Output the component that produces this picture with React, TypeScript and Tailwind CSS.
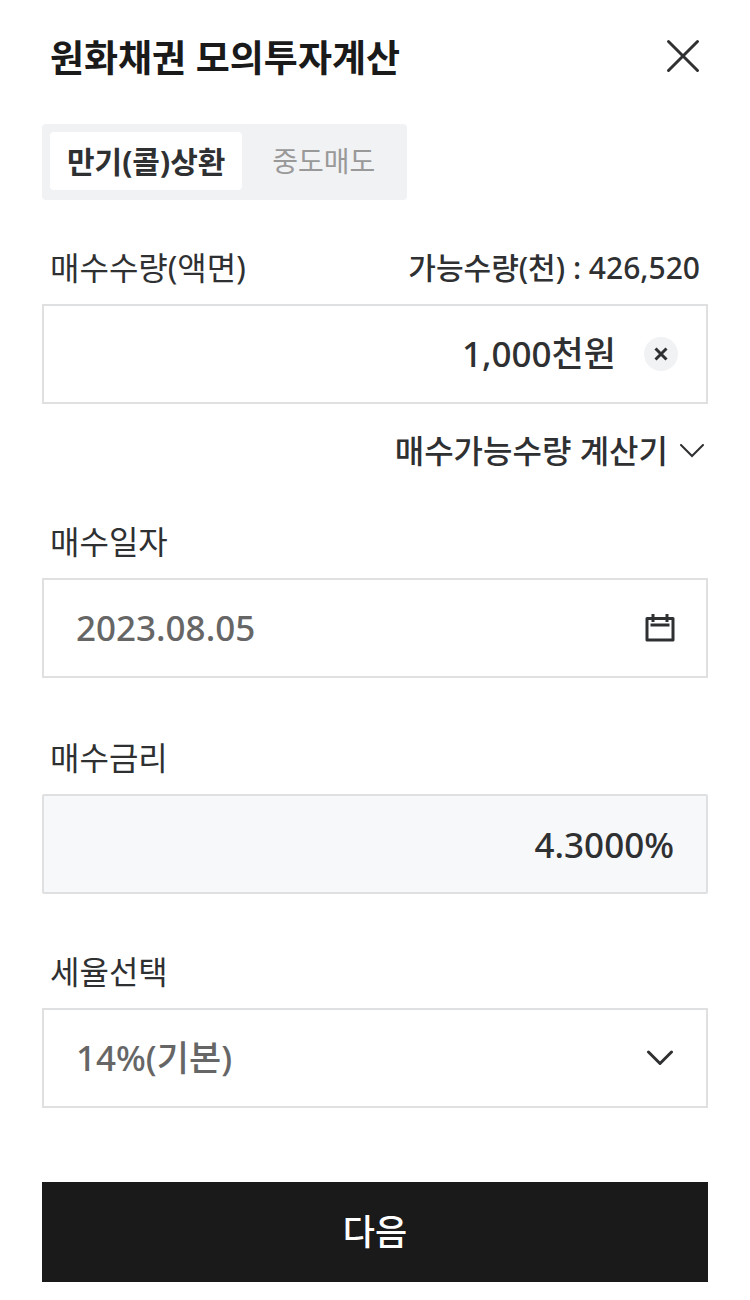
import { useState } from "react";

const label = "px-2 text-[32px] leading-[40px] text-[#2f3032]";

export default function App() {
  const [tab, setTab] = useState(0);
  const [amount, setAmount] = useState("1,000천원");
  const tabs = ["만기(콜)상환", "중도매도"];
  return (
    <main className="flex min-h-screen flex-col bg-white px-[42px] pb-[18px] font-['Noto_Sans','Noto_Sans_CJK_KR',sans-serif] text-[#2f3032]">
      <header className="flex items-start justify-between px-2 pt-[34px]">
        <h1 className="text-[37px] leading-[48px] font-bold text-[#1a1a1a]">원화채권 모의투자계산</h1>
        <button type="button" aria-label="닫기" className="mt-[5px] block">
          <svg width="34" height="34" viewBox="0 0 34 34" fill="none" stroke="#2f3032" strokeWidth="3" strokeLinecap="round">
            <path d="M2.5 2.5 31.5 31.5M31.5 2.5 2.5 31.5" />
          </svg>
        </button>
      </header>

      <div role="tablist" className="mt-[42px] flex h-[76px] self-start rounded-[4px] bg-[#f1f2f4] p-2">
        {tabs.map((t, i) => (
          <button
            key={t}
            type="button"
            role="tab"
            aria-selected={tab === i}
            onClick={() => setTab(i)}
            className={
              tab === i
                ? "h-[58px] rounded-[4px] bg-white px-[17px] text-[30px] font-bold text-[#2f3032]"
                : "h-[58px] pr-6 pl-[30px] text-[28px] text-[#999]"
            }
          >
            {t}
          </button>
        ))}
      </div>

      <div className="mt-[48px] flex items-center justify-between">
        <label htmlFor="amount" className={label}>매수수량(액면)</label>
        <span className="pr-2 text-[30px] leading-[40px] font-medium">가능수량(천) : 426,520</span>
      </div>
      <div className="mt-4 flex h-[100px] items-center border-2 border-[#dfe0e2] pr-[28px] pl-8">
        <input
          id="amount"
          value={amount}
          onChange={(e) => setAmount(e.target.value)}
          className="min-w-0 flex-1 text-right text-[35px] font-medium outline-none"
        />
        <button
          type="button"
          aria-label="지우기"
          onClick={() => setAmount("")}
          className="ml-7 flex size-[34px] items-center justify-center rounded-full bg-[#f1f2f4]"
        >
          <svg width="14" height="14" viewBox="0 0 14 14" fill="none" stroke="#2f3032" strokeWidth="3">
            <path d="M1.5 1.5 12.5 12.5M12.5 1.5 1.5 12.5" />
          </svg>
        </button>
      </div>
      <button type="button" className="mt-6 mr-1 flex items-center gap-3 self-end text-[32px] leading-[46px] font-medium">
        매수가능수량 계산기
        <svg width="24" height="14" viewBox="0 0 24 14" fill="none" stroke="#2f3032" strokeWidth="2" strokeLinecap="round">
          <path d="M1 1 12 12 23 1" />
        </svg>
      </button>

      <label htmlFor="date" className={label + " mt-[48px]"}>매수일자</label>
      <div className="mt-4 flex h-[100px] items-center border-2 border-[#dfe0e2] pr-[31px] pl-8">
        <input id="date" defaultValue="2023.08.05" className="min-w-0 flex-1 text-[35px] font-medium text-[#666] outline-none" />
        <button type="button" aria-label="날짜 선택">
          <svg width="30" height="30" viewBox="0 0 30 30" fill="none" stroke="#2f3032" strokeWidth="3">
            <path d="M2 5.5H28V27H2ZM5.500 12H24.500M8 1V9M22 1V9" strokeLinejoin="round" />
          </svg>
        </button>
      </div>

      <label htmlFor="rate" className={label + " mt-[60px]"}>매수금리</label>
      <input
        id="rate"
        readOnly
        value="4.3000%"
        className="mt-4 h-[100px] rounded-[2px] border-2 border-[#dfe0e2] bg-[#f7f8fa] px-8 text-right text-[35px] font-medium outline-none"
      />

      <label htmlFor="tax" className={label + " mt-[58px]"}>세율선택</label>
      <div className="mt-4 grid h-[100px] items-center">
        <select
          id="tax"
          className="col-start-1 row-start-1 h-[100px] appearance-none border-2 border-[#dfe0e2] bg-white px-8 text-[35px] font-medium text-[#666] outline-none"
        >
          <option>14%(기본)</option>
        </select>
        <svg className="pointer-events-none col-start-1 row-start-1 mr-[34px] justify-self-end" width="28" height="16" viewBox="0 0 28 16" fill="none" stroke="#2f3032" strokeWidth="3" strokeLinecap="round" strokeLinejoin="round">
          <path d="M2.500 2 14 13.500 25.500 2" />
        </svg>
      </div>

      <button type="button" className="mt-[74px] h-[100px] bg-[#1a1a1a] text-[35px] font-medium text-white">다음</button>
    </main>
  );
}
